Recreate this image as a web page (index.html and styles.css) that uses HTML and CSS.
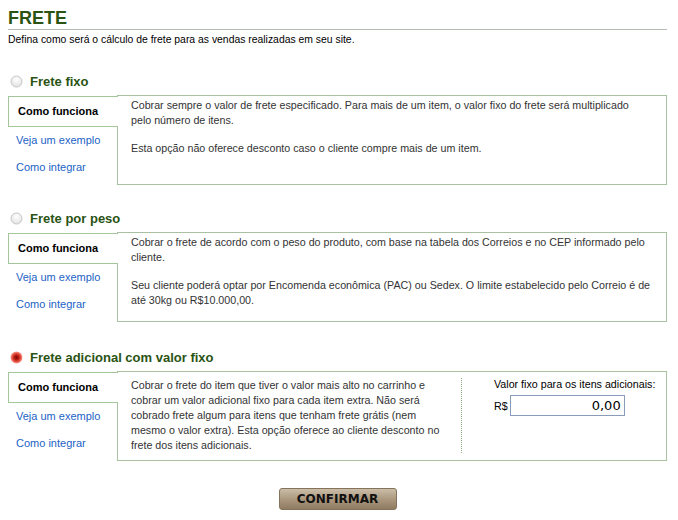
FILE: index.html
```html
<!DOCTYPE html>
<html lang="pt-BR">
<head>
<meta charset="utf-8">
<title>Frete</title>
<link rel="stylesheet" href="styles.css">
</head>
<body>
<div class="page">
  <h1 class="titulo">FRETE</h1>
  <p class="subtitulo">Defina como será o cálculo de frete para as vendas realizadas em seu site.</p>

  <div class="opcao">
    <div class="opcao-cab">
      <svg class="radio" width="13" height="13" viewBox="0 0 13 13"><defs><radialGradient id="rg1" cx="50%" cy="35%" r="60%"><stop offset="0" stop-color="#ffffff"/><stop offset="1" stop-color="#e4e4e4"/></radialGradient></defs><circle cx="6.5" cy="6.5" r="5.5" fill="url(#rg1)" stroke="#c6c6c6" stroke-width="1"/></svg>
      <span class="opcao-nome">Frete fixo</span>
    </div>
    <div class="painel">
      <ul class="abas">
        <li class="aba ativa">Como funciona</li>
        <li class="aba">Veja um exemplo</li>
        <li class="aba">Como integrar</li>
      </ul>
      <div class="conteudo">
        <div class="texto">
          <p>Cobrar sempre o valor de frete especificado. Para mais de um item, o valor fixo do frete será multiplicado pelo número de itens.</p>
          <p>Esta opção não oferece desconto caso o cliente compre mais de um item.</p>
        </div>
      </div>
    </div>
  </div>

  <div class="opcao">
    <div class="opcao-cab">
      <svg class="radio" width="13" height="13" viewBox="0 0 13 13"><defs><radialGradient id="rg2" cx="50%" cy="35%" r="60%"><stop offset="0" stop-color="#ffffff"/><stop offset="1" stop-color="#e4e4e4"/></radialGradient></defs><circle cx="6.5" cy="6.5" r="5.5" fill="url(#rg2)" stroke="#c6c6c6" stroke-width="1"/></svg>
      <span class="opcao-nome">Frete por peso</span>
    </div>
    <div class="painel">
      <ul class="abas">
        <li class="aba ativa">Como funciona</li>
        <li class="aba">Veja um exemplo</li>
        <li class="aba">Como integrar</li>
      </ul>
      <div class="conteudo">
        <div class="texto">
          <p>Cobrar o frete de acordo com o peso do produto, com base na tabela dos Correios e no CEP informado pelo cliente.</p>
          <p>Seu cliente poderá optar por Encomenda econômica (PAC) ou Sedex. O limite estabelecido pelo Correio é de até 30kg ou R$10.000,00.</p>
        </div>
      </div>
    </div>
  </div>

  <div class="opcao opcao-ultima">
    <div class="opcao-cab">
      <svg class="radio" width="13" height="13" viewBox="0 0 13 13"><defs><radialGradient id="rg3" cx="50%" cy="50%" r="50%"><stop offset="0" stop-color="#7a0c06"/><stop offset="0.35" stop-color="#b3180e"/><stop offset="0.75" stop-color="#ea5a4a"/><stop offset="1" stop-color="#f6a59a"/></radialGradient></defs><circle cx="6.5" cy="6.5" r="6" fill="url(#rg3)"/></svg>
      <span class="opcao-nome">Frete adicional com valor fixo</span>
    </div>
    <div class="painel">
      <ul class="abas">
        <li class="aba ativa">Como funciona</li>
        <li class="aba">Veja um exemplo</li>
        <li class="aba">Como integrar</li>
      </ul>
      <div class="conteudo conteudo-duplo">
        <div class="texto texto-estreito">
          <p>Cobrar o frete do item que tiver o valor mais alto no carrinho e cobrar um valor adicional fixo para cada item extra. Não será cobrado frete algum para itens que tenham frete grátis (nem mesmo o valor extra). Esta opção oferece ao cliente desconto no frete dos itens adicionais.</p>
        </div>
        <div class="campo">
          <div class="campo-rotulo">Valor fixo para os itens adicionais:</div>
          <div class="campo-linha">
            <span class="moeda">R$</span>
            <input class="valor" type="text" value="0,00">
          </div>
        </div>
      </div>
    </div>
  </div>

  <div class="acoes">
    <button class="botao" type="button">CONFIRMAR</button>
  </div>
</div>
</body>
</html>
```

FILE: styles.css
```css
html, body {
  margin: 0;
  padding: 0;
  background: #ffffff;
}

.page {
  padding: 7px 11px 0 8px;
  font-family: "Liberation Sans", Arial, sans-serif;
  font-size: 11px;
  color: #000;
}

.titulo {
  margin: 0;
  font-size: 18px;
  line-height: 22px;
  font-weight: bold;
  color: #2a5314;
  border-bottom: 1px solid #b4bdb0;
}

.subtitulo {
  margin: 3px 0 0;
  font-size: 10.4px;
  line-height: 14px;
}

.opcao {
  margin-top: 24px;
}

.opcao + .opcao {
  margin-top: 23px;
}

.opcao + .opcao-ultima {
  margin-top: 25px;
}

.opcao-cab {
  display: flex;
  align-items: center;
  height: 20px;
  padding-left: 2px;
}

.radio {
  display: block;
  margin-right: 7px;
}

.opcao-nome {
  font-family: "Liberation Sans", Arial, sans-serif;
  font-weight: bold;
  font-size: 13px;
  color: #2a5314;
}

.painel {
  display: flex;
  margin-top: 4px;
}

.abas {
  list-style: none;
  margin: 1px -1px 0 0;
  padding: 0;
  width: 110px;
  flex: none;
  position: relative;
  z-index: 1;
}

.aba {
  height: 27px;
  line-height: 27px;
  padding-left: 8px;
  color: #1b63c6;
}

.aba.ativa {
  height: 29px;
  line-height: 29px;
  padding-left: 9px;
  font-weight: bold;
  color: #000;
  background: #fff;
  border: 1px solid #a3c79b;
  border-right: none;
}

.conteudo {
  flex: 1;
  height: 88px;
  border: 1px solid #a9c0a2;
  padding: 0 15px 0 13px;
  color: #333;
  font-size: 10.7px;
}

.texto p {
  margin: 2px 0 13px;
  line-height: 15px;
}

.conteudo-duplo {
  display: flex;
  align-items: flex-start;
  padding-right: 4px;
}

.texto-estreito {
  width: 318px;
  flex: none;
  padding-right: 12px;
  margin-top: 6px;
  border-right: 1px dotted #8cb080;
}

.texto-estreito p {
  margin: 0;
}

.campo {
  padding-left: 32px;
  padding-top: 5px;
  color: #000;
  white-space: nowrap;
}

.campo-rotulo {
  line-height: 14px;
}

.campo-linha {
  display: flex;
  align-items: center;
  margin-top: 4px;
}

.moeda {
  margin-right: 2px;
}

.valor {
  width: 108px;
  height: 17px;
  padding: 1px 3px 1px 2px;
  border: 1px solid #8a9cba;
  font-family: "DejaVu Sans", Verdana, sans-serif;
  font-size: 13px;
  text-align: right;
  color: #000;
  background: #fff;
  outline: none;
}

.acoes {
  display: flex;
  justify-content: center;
  margin-top: 27px;
}

.botao {
  width: 118px;
  height: 22px;
  padding: 0;
  border: 1px solid #85745c;
  border-radius: 3px;
  background: linear-gradient(#cbbda8, #a8957b 55%, #8e7b62);
  font-family: "DejaVu Sans", Verdana, sans-serif;
  font-weight: bold;
  font-size: 12px;
  color: #111;
}
```
